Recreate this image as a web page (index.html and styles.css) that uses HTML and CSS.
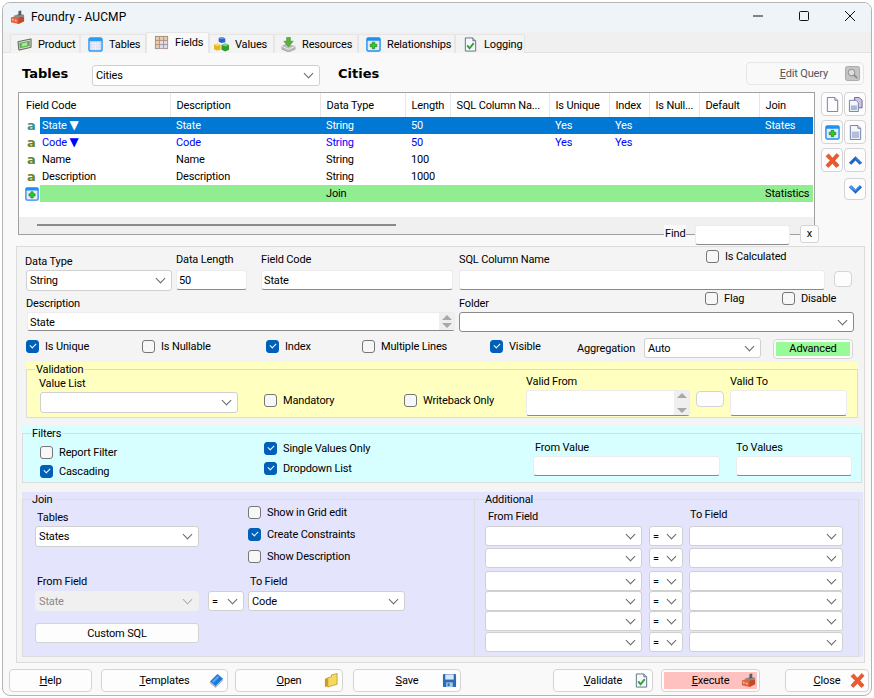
FILE: index.html
```html
<!DOCTYPE html>
<html lang="en">
<head>
    <meta charset="UTF-8">
    <meta name="viewport" content="width=device-width, initial-scale=1.0">
    <title>Foundry - AUCMP</title>
    <link rel="stylesheet" href="styles.css">
</head>
<body>
    <!-- icon sprite -->
    <svg class="sprite" xmlns="http://www.w3.org/2000/svg">
        <symbol id="i-factory" viewBox="0 0 16 16">
            <path d="M1 8l6-2 8 1v5l-6 3-8-2z" fill="#e2633c"/>
            <path d="M9 8l6-1v5l-6 3z" fill="#c4482a"/>
            <path d="M4 6l6-2 5 1v2l-6 1-5-1z" fill="#8a8a8a"/>
            <path d="M9 1l3-.5V5L9 6z" fill="#5c5c5c"/>
            <path d="M2 9l2 .5v2l-2-.5zM5 10l2 .5v2L5 12z" fill="#f3b39c"/>
        </symbol>
        <symbol id="i-product" viewBox="0 0 16 16">
            <path d="M1 5l14-3v9L2 14z" fill="#d8d8d0" stroke="#55604e"/>
            <path d="M2.500 6.500l11-2.500v5.500l-10.500 2.500z" fill="#54b04a"/>
            <path d="M5 7l6-1.500v3.500l-6 1.500z" fill="#b5e0a5"/>
        </symbol>
        <symbol id="i-tables" viewBox="0 0 16 16">
            <rect x="1" y="1" width="14" height="14" rx="2" fill="#d9d9f2" stroke="#2c9cf0" stroke-width="1.500"/>
            <rect x="1" y="1" width="14" height="3.500" fill="#2c9cf0"/>
            <path d="M3 7h10M3 9.500h10M3 12h10M5.500 5v9M8 5v9M10.500 5v9" stroke="#f4f4fc" stroke-width=".8"/>
        </symbol>
        <symbol id="i-fields" viewBox="0 0 16 16">
            <rect x="1.500" y="1.500" width="13" height="13" fill="#f2c9a2" stroke="#a09088"/>
            <rect x="6" y="6" width="8" height="8" fill="#dcdcf2"/>
            <path d="M1.500 5.800h13M1.500 10.200h13M5.800 1.500v13M10.200 1.500v13" stroke="#a89484"/>
        </symbol>
        <symbol id="i-values" viewBox="0 0 16 16">
            <path d="M5 1l4-1 3 1.500v4l-4 1-3-1.500z" fill="#2a62c8"/>
            <path d="M5 1l3 1.500 4-1-3-1.500z" fill="#6a9cf0"/>
            <path d="M0 8l4-1 3 1.500v5l-4 1-3-1.500z" fill="#e6b818"/>
            <path d="M0 8l3 1.500 4-1-3-1.500z" fill="#f8e070"/>
            <path d="M8 8.500l4-1.500 4 1.500v5l-4 2-4-2z" fill="#2e9c2e"/>
            <path d="M8 8.500l4 1.500 4-1.500-4-1.500z" fill="#7ed07e"/>
        </symbol>
        <symbol id="i-resources" viewBox="0 0 16 16">
            <path d="M1 10l4-2 10 2v3l-7 3-7-3z" fill="#bdbdbd" stroke="#8a8a8a" stroke-width=".6"/>
            <path d="M1 10l7 3 7-3" fill="none" stroke="#eee"/>
            <path d="M6 .5h4v4h3l-5 6-5-6h3z" fill="#5cb040" stroke="#3c8a28" stroke-width=".6"/>
        </symbol>
        <symbol id="i-rel" viewBox="0 0 16 16">
            <rect x="1" y="1" width="14" height="14" rx="1.500" fill="#e8e8f6" stroke="#1e90f0" stroke-width="1.500"/>
            <rect x="1" y="1" width="14" height="3" fill="#1e90f0"/>
            <path d="M6.700 5.500h2.600v2.200h2.200v2.600H9.300v2.200H6.700v-2.200H4.500V7.700h2.200z" fill="#2ad02a" stroke="#0a6a0a" stroke-width=".6"/>
        </symbol>
        <symbol id="i-log" viewBox="0 0 16 16">
            <path d="M2.500 1h8l3 3v11h-11z" fill="#f6f8fc" stroke="#5c7088"/>
            <path d="M10.500 1v3h3" fill="#cfd8e6" stroke="#5c7088"/>
            <path d="M4.500 9l2.500 3 4.500-5.500" fill="none" stroke="#2ea02e" stroke-width="2"/>
        </symbol>
        <symbol id="i-doc" viewBox="0 0 16 16">
            <path d="M2.500 .5h8l3 3v12h-11z" fill="#fdfdff" stroke="#6c7ea4"/>
            <path d="M10.500 .5v3h3" fill="#d8deea" stroke="#6c7ea4"/>
        </symbol>
        <symbol id="i-copy" viewBox="0 0 16 16">
            <path d="M7 .5h5l3 3v8H7z" fill="#cfc4e4" stroke="#6a5a94"/>
            <path d="M1.500 3.500h7l2.500 2.500v9.500H1.500z" fill="#f4f6fc" stroke="#6c7ea4"/>
            <rect x="3" y="9" width="6.500" height="5" fill="#a9b6d6"/>
        </symbol>
        <symbol id="i-form" viewBox="0 0 16 16">
            <path d="M2.500 .5h8l3 3v12h-11z" fill="#f4f6fc" stroke="#6c7ea4"/>
            <path d="M10.500 .5v3h3" fill="#d8deea" stroke="#6c7ea4"/>
            <rect x="4" y="7" width="8" height="7" fill="#b4bedc"/>
        </symbol>
        <symbol id="i-del" viewBox="0 0 16 16">
            <path d="M1 3.500L4 1l4 4.500L12.500 .5 15 3l-4.500 5 4.500 5-3 2.500-4-4.500L3.500 15.500 1 13l4.500-5z" fill="#ee5a2a" stroke="#c83c1c" stroke-width=".6"/>
        </symbol>
        <symbol id="i-up" viewBox="0 0 16 16">
            <path d="M1 10.500L8 3.500l7 7-2.500 2L8 8l-4.500 4.500z" fill="#1c64c0"/>
            <path d="M8 3.500l7 7-1 .8L8 5.500z" fill="#3f8ce4"/>
        </symbol>
        <symbol id="i-down" viewBox="0 0 16 16">
            <path d="M1 5.500L8 12.500l7-7-2.500-2L8 8 3.500 3.500z" fill="#1c64c0"/>
            <path d="M1 5.500L3.500 3.500 8 8l4.500-4.500 1 .8L8 9.800z" fill="#4c98ea"/>
        </symbol>
        <symbol id="i-book" viewBox="0 0 16 16">
            <path d="M1 9l8-8 6 5-8 8z" fill="#1e78d8"/>
            <path d="M1 9l6 5 8-8v2l-8 8-6-5z" fill="#b0b8c4"/>
            <path d="M3 9l6-6 2 1.500-6 6z" fill="#58a4f0"/>
        </symbol>
        <symbol id="i-folder" viewBox="0 0 16 16">
            <path d="M1 6l3-1v9l-3 1z" fill="#c89a20"/>
            <path d="M4 5l4-1V2l6-1.500V12L4 15z" fill="#f4d860" stroke="#b08a20" stroke-width=".7"/>
        </symbol>
        <symbol id="i-save" viewBox="0 0 16 16">
            <rect x="1" y="1" width="14" height="14" rx="1" fill="#2a6cb8"/>
            <rect x="3.500" y="1.500" width="9" height="5.500" fill="#d8e6f6"/>
            <rect x="4.500" y="10" width="7" height="5" fill="#a9c6e8"/>
            <rect x="6" y="11" width="2" height="3" fill="#2a6cb8"/>
        </symbol>
        <symbol id="i-query" viewBox="0 0 16 16">
            <rect x=".5" y=".5" width="15" height="15" rx="2" fill="#c4c4c4" stroke="#a8a8a8"/>
            <circle cx="7" cy="7" r="3.500" fill="#dedede" stroke="#8a8a8a"/>
            <path d="M9.500 9.500l3.500 3.500" stroke="#8a8a8a" stroke-width="2"/>
        </symbol>
    </svg>

    <div class="window">
        <div class="titlebar">
            <svg class="icon title-icon"><use href="#i-factory"/></svg>
            <span class="title">Foundry - AUCMP</span>
            <div class="caption-buttons">
                <svg class="caption" viewBox="0 0 12 12"><path d="M1 6h10" stroke="#111"/></svg>
                <svg class="caption" viewBox="0 0 12 12"><rect x="1.500" y="1.500" width="9" height="9" rx="1" fill="none" stroke="#111"/></svg>
                <svg class="caption" viewBox="0 0 12 12"><path d="M1 1l10 10M11 1L1 11" stroke="#111"/></svg>
            </div>
        </div>

        <div class="tabs">
            <div class="tab"><svg class="icon"><use href="#i-product"/></svg>Product</div>
            <div class="tab"><svg class="icon"><use href="#i-tables"/></svg>Tables</div>
            <div class="tab active"><svg class="icon"><use href="#i-fields"/></svg>Fields</div>
            <div class="tab"><svg class="icon"><use href="#i-values"/></svg>Values</div>
            <div class="tab"><svg class="icon"><use href="#i-resources"/></svg>Resources</div>
            <div class="tab"><svg class="icon"><use href="#i-rel"/></svg>Relationships</div>
            <div class="tab"><svg class="icon"><use href="#i-log"/></svg>Logging</div>
        </div>

        <div class="page">
            <div class="head">
                <span class="head-title">Tables</span>
                <div class="select head-select">Cities</div>
                <span class="head-title head-name">Cities</span>
                <div class="edit-query"><span><u>E</u>dit Query</span><svg class="icon"><use href="#i-query"/></svg></div>
            </div>

            <div class="list-row">
                <div class="grid-box">
                    <table class="field-grid">
                        <colgroup>
                            <col class="c-icon"><col class="c-code"><col class="c-desc"><col class="c-type"><col class="c-len"><col class="c-sql"><col class="c-uniq"><col class="c-idx"><col class="c-null"><col class="c-def"><col class="c-join">
                        </colgroup>
                        <thead>
                            <tr>
                                <th colspan="2" class="first">Field Code</th><th>Description</th><th>Data Type</th><th>Length</th><th>SQL Column Na...</th><th>Is Unique</th><th>Index</th><th>Is Null...</th><th>Default</th><th>Join</th>
                            </tr>
                        </thead>
                        <tbody>
                            <tr class="selected">
                                <td class="glyph"><span class="a-icon teal">a</span></td>
                                <td class="code">State <span class="arrow">▼</span></td><td>State</td><td>String</td><td>50</td><td></td><td>Yes</td><td>Yes</td><td></td><td></td><td>States</td>
                            </tr>
                            <tr class="key">
                                <td class="glyph"><span class="a-icon">a</span></td>
                                <td class="code">Code <span class="arrow">▼</span></td><td>Code</td><td>String</td><td>50</td><td></td><td>Yes</td><td>Yes</td><td></td><td></td><td></td>
                            </tr>
                            <tr>
                                <td class="glyph"><span class="a-icon">a</span></td>
                                <td class="code">Name</td><td>Name</td><td>String</td><td>100</td><td></td><td></td><td></td><td></td><td></td><td></td>
                            </tr>
                            <tr>
                                <td class="glyph"><span class="a-icon">a</span></td>
                                <td class="code">Description</td><td>Description</td><td>String</td><td>1000</td><td></td><td></td><td></td><td></td><td></td><td></td>
                            </tr>
                            <tr class="join-row">
                                <td class="glyph"><svg class="icon"><use href="#i-rel"/></svg></td>
                                <td class="code"></td><td></td><td>Join</td><td></td><td></td><td></td><td></td><td></td><td></td><td>Statistics</td>
                            </tr>
                        </tbody>
                    </table>
                    <div class="grid-filler"></div>
                    <div class="hscroll"><div class="hthumb"></div></div>
                </div>

                <div class="side-buttons">
                    <button class="side-btn"><svg class="icon"><use href="#i-doc"/></svg></button>
                    <button class="side-btn"><svg class="icon"><use href="#i-copy"/></svg></button>
                    <button class="side-btn"><svg class="icon"><use href="#i-rel"/></svg></button>
                    <button class="side-btn"><svg class="icon"><use href="#i-form"/></svg></button>
                    <button class="side-btn"><svg class="icon"><use href="#i-del"/></svg></button>
                    <button class="side-btn"><svg class="icon"><use href="#i-up"/></svg></button>
                    <button class="side-btn down-btn"><svg class="icon"><use href="#i-down"/></svg></button>
                </div>
            </div>

            <div class="find-row">
                <span class="find-label">Find</span>
                <input class="text find-input" type="text">
                <button class="find-x">x</button>
            </div>

            <div class="panel">
                <div class="row-one">
                    <div class="field type-field">
                        <label>Data Type</label>
                        <div class="select type-select">String</div>
                    </div>
                    <div class="field length-field">
                        <label class="gap-3">Data Length</label>
                        <input class="text" type="text" value="50">
                    </div>
                    <div class="field code-field">
                        <label class="gap-3">Field Code</label>
                        <input class="text" type="text" value="State">
                    </div>
                    <div class="field sql-field">
                        <div class="label-row gap-3">
                            <label class="sql-label">SQL Column Name</label>
                            <label class="check raise"><input type="checkbox">Is Calculated</label>
                        </div>
                        <input class="text" type="text">
                    </div>
                    <button class="small-btn sql-btn"></button>
                </div>

                <div class="row-two">
                    <div class="field">
                        <label>Description</label>
                        <div class="text desc-box">State
                            <div class="spin"><i class="spin-up"></i><i class="spin-down"></i></div>
                        </div>
                    </div>
                    <div class="field">
                        <div class="label-row">
                            <label class="folder-label">Folder</label>
                            <label class="check raise flag"><input type="checkbox">Flag</label>
                            <label class="check raise"><input type="checkbox">Disable</label>
                        </div>
                        <div class="select folder-select"></div>
                    </div>
                </div>

                <div class="row-three">
                    <label class="check"><input type="checkbox" checked>Is Unique</label>
                    <label class="check"><input type="checkbox">Is Nullable</label>
                    <label class="check"><input type="checkbox" checked>Index</label>
                    <label class="check"><input type="checkbox">Multiple Lines</label>
                    <label class="check"><input type="checkbox" checked>Visible</label>
                    <span class="agg-label">Aggregation</span>
                    <div class="select">Auto</div>
                    <button class="advanced"><span>Advanced</span></button>
                </div>

                <div class="group validation">
                    <fieldset>
                        <legend>Validation</legend>
                        <div class="validation-grid">
                            <div class="field value-list">
                                <label>Value List</label>
                                <div class="select"></div>
                            </div>
                            <label class="check"><input type="checkbox">Mandatory</label>
                            <label class="check"><input type="checkbox">Writeback Only</label>
                            <div class="field valid-from">
                                <label>Valid From</label>
                                <div class="text tall-box">
                                    <div class="spin"><i class="spin-up"></i><i class="spin-down"></i></div>
                                </div>
                            </div>
                            <button class="small-btn valid-btn"></button>
                            <div class="field">
                                <label>Valid To</label>
                                <input class="text tall-box" type="text">
                            </div>
                        </div>
                    </fieldset>
                </div>

                <div class="group filters">
                    <fieldset>
                        <legend>Filters</legend>
                        <div class="filters-grid">
                            <div class="check-stack low">
                                <label class="check"><input type="checkbox">Report Filter</label>
                                <label class="check"><input type="checkbox" checked>Cascading</label>
                            </div>
                            <div class="check-stack high">
                                <label class="check"><input type="checkbox" checked>Single Values Only</label>
                                <label class="check"><input type="checkbox" checked>Dropdown List</label>
                            </div>
                            <div class="field from-value">
                                <label>From Value</label>
                                <input class="text" type="text">
                            </div>
                            <div class="field to-value">
                                <label>To Values</label>
                                <input class="text" type="text">
                            </div>
                        </div>
                    </fieldset>
                </div>

                <div class="group join-group">
                    <fieldset class="join-set">
                        <legend>Join</legend>
                        <div class="join-top">
                            <div class="field join-tables">
                                <label>Tables</label>
                                <div class="select">States</div>
                            </div>
                            <div class="check-stack join-checks">
                                <label class="check"><input type="checkbox">Show in Grid edit</label>
                                <label class="check"><input type="checkbox" checked>Create Constraints</label>
                                <label class="check"><input type="checkbox">Show Description</label>
                            </div>
                        </div>
                        <div class="join-fields">
                            <div class="field">
                                <label>From Field</label>
                                <div class="select disabled">State</div>
                            </div>
                            <div class="select op">=</div>
                            <div class="field">
                                <label>To Field</label>
                                <div class="select">Code</div>
                            </div>
                        </div>
                        <button class="custom-sql">Custom SQL</button>
                    </fieldset>

                    <fieldset class="additional-set">
                        <legend>Additional</legend>
                        <div class="additional-grid">
                            <span class="add-from">From Field</span><span></span><span class="add-to">To Field</span>
                            <div class="select"></div><div class="select op">=</div><div class="select to"></div>
                            <div class="select"></div><div class="select op">=</div><div class="select to"></div>
                            <div class="select"></div><div class="select op">=</div><div class="select to"></div>
                            <div class="select"></div><div class="select op">=</div><div class="select to"></div>
                            <div class="select"></div><div class="select op">=</div><div class="select to"></div>
                            <div class="select"></div><div class="select op">=</div><div class="select to"></div>
                        </div>
                    </fieldset>
                </div>
            </div>

            <div class="footer">
                <button class="btn btn-help"><u>H</u>elp</button>
                <button class="btn btn-templates"><u>T</u>emplates<svg class="icon"><use href="#i-book"/></svg></button>
                <button class="btn btn-open"><u>O</u>pen<svg class="icon"><use href="#i-folder"/></svg></button>
                <button class="btn btn-save"><u>S</u>ave<svg class="icon"><use href="#i-save"/></svg></button>
                <button class="btn btn-validate"><u>V</u>alidate<svg class="icon"><use href="#i-log"/></svg></button>
                <button class="btn btn-execute"><span class="execute-fill"><u>E</u>xecute<svg class="icon"><use href="#i-factory"/></svg></span></button>
                <button class="btn btn-close"><u>C</u>lose<svg class="icon"><use href="#i-del"/></svg></button>
            </div>
        </div>
    </div>
</body>
</html>
```

FILE: styles.css
```css
/* Reset */
* {
    box-sizing: border-box;
}

body {
    margin: 0;
    background-color: #fff;
    font-family: Roboto, "Liberation Sans", sans-serif;
    font-size: 11px;
    letter-spacing: -0.15px;
    color: #000;
    overflow: hidden;
}

.sprite {
    display: none;
}

.icon {
    width: 15px;
    height: 15px;
    flex: none;
    display: block;
}

button {
    font: inherit;
    letter-spacing: inherit;
    color: inherit;
    padding: 0;
}

label {
    display: block;
    height: 16px;
    padding-top: 1px;
    line-height: 16px;
}

/* Window frame */
.window {
    margin: 2px 0 0 2px;
    width: 870px;
    height: 694px;
    border: 1px solid #b4b4b4;
    border-radius: 8px;
    overflow: hidden;
    background-color: #f9f9f9;
}

.titlebar {
    height: 29px;
    background-color: #eff4f9;
    display: flex;
    align-items: center;
    padding: 0 0 1px 7px;
}

.title-icon {
    margin-right: 6px;
}

.title {
    font-size: 12px;
    letter-spacing: 0.1px;
}

.caption-buttons {
    margin-left: auto;
    display: flex;
    gap: 34px;
    padding: 0 15px 2px 0;
}

.caption {
    width: 12px;
    height: 12px;
}

/* Tabs */
.tabs {
    height: 21px;
    background-color: #f0f0f0;
    padding-left: 7px;
    display: grid;
    grid-template-columns: 70px 66px 63px 65px 84px 97px 70px;
    align-items: end;
    border-bottom: 1px solid #e2e2e2;
}

.tab {
    height: 19px;
    background-color: #f3f3f3;
    border: 1px solid #e6e6e6;
    border-bottom: 0;
    display: flex;
    align-items: center;
    gap: 6px;
    padding: 1px 0 0 7px;
}

.tab:nth-child(1) { padding-left: 6px; }
.tab:nth-child(4) { padding-left: 4px; }
.tab:nth-child(5) { padding-left: 6px; }

.tab.active {
    height: 21px;
    background-color: #f9f9f9;
    padding-bottom: 2px;
}

/* Header row */
.page {
    height: 643px;
}

.head {
    display: flex;
    align-items: flex-start;
    height: 39px;
    padding: 9px 0 0 19px;
}

.head-title {
    font-family: "DejaVu Sans", sans-serif;
    font-size: 13px;
    font-weight: 700;
    letter-spacing: 0;
    width: 70px;
    line-height: 24px;
}

.head-name {
    width: 408px;
    margin-left: 18px;
}

.select {
    position: relative;
    height: 20px;
    background-color: #fff;
    border: 1px solid #d0d0d0;
    border-radius: 3px;
    padding: 1px 0 0 3px;
    line-height: 18px;
}

.select::after {
    content: "";
    position: absolute;
    right: 7px;
    top: 4px;
    width: 6px;
    height: 6px;
    border-right: 1px solid #666;
    border-bottom: 1px solid #666;
    transform: rotate(45deg);
}

.head-select {
    width: 228px;
    height: 21px;
    margin-top: 3px;
}

.edit-query {
    width: 118px;
    height: 23px;
    border: 1px solid #e6e6e6;
    border-radius: 4px;
    display: flex;
    align-items: center;
    justify-content: flex-end;
    gap: 17px;
    padding-right: 3px;
    color: #555;
}

/* Field list */
.list-row {
    display: flex;
    padding-left: 15px;
}

.grid-box {
    width: 797px;
    height: 143px;
    border: 1px solid #a0a0a0;
    background-color: #fff;
}

.field-grid {
    border-collapse: collapse;
    table-layout: fixed;
    width: 794px;
}

.c-icon { width: 21px; }
.c-code { width: 130px; }
.c-desc { width: 150px; }
.c-type { width: 85px; }
.c-len { width: 45px; }
.c-sql { width: 99px; }
.c-uniq { width: 60px; }
.c-idx { width: 40px; }
.c-null { width: 50px; }
.c-def { width: 60px; }
.c-join { width: 54px; }

.field-grid th {
    height: 24px;
    font-weight: 400;
    text-align: left;
    padding: 0 0 0 6px;
    border-right: 1px solid #e6e6e6;
    overflow: hidden;
    white-space: nowrap;
}

.field-grid th.first {
    padding-left: 7px;
}

.field-grid th:last-child {
    border-right: 0;
}

.field-grid td {
    height: 17px;
    padding: 1px 0 0 6px;
    line-height: 16px;
    white-space: nowrap;
    overflow: hidden;
}

.field-grid td.code {
    padding-left: 2px;
}

.field-grid td.glyph {
    padding: 0;
    background-color: #fff;
}

.glyph .icon {
    width: 14px;
    height: 14px;
    margin-left: 6px;
}

.a-icon {
    display: block;
    margin-left: 8px;
    font-family: "DejaVu Sans", sans-serif;
    font-weight: 700;
    font-size: 13px;
    letter-spacing: 0;
    color: #66852c;
}

.a-icon.teal {
    color: #3f8f88;
}

.arrow {
    font-family: "DejaVu Sans", sans-serif;
    font-size: 12px;
    line-height: 12px;
}

.selected td {
    background-color: #0078d4;
    color: #fff;
}

.key td {
    color: #0000ff;
}

.join-row td {
    background-color: #90ee90;
}

.grid-filler {
    height: 15px;
}

.hscroll {
    height: 17px;
    background-color: #f0f0f0;
    padding: 7px 0 0 18px;
}

.hthumb {
    width: 359px;
    height: 2px;
    background-color: #8a8a8a;
}

.side-buttons {
    display: grid;
    grid-template-columns: 22px 22px;
    grid-auto-rows: 24px;
    gap: 4px 1px;
    margin-left: 6px;
}

.side-btn {
    background-color: #fdfdfd;
    border: 1px solid #d4d4d4;
    border-radius: 4px;
    display: flex;
    align-items: center;
    justify-content: center;
}

.down-btn {
    grid-column: 2;
    margin-top: 2px;
}

/* Find box, lies over the bottom edge of the list */
.find-row {
    display: flex;
    align-items: flex-start;
    height: 21px;
    margin-top: -10px;
    padding-left: 661px;
    position: relative;
}

.find-label {
    width: 22px;
    background-color: #f9f9f9;
    padding-left: 1px;
    line-height: 18px;
}

.text {
    display: block;
    height: 20px;
    width: 100%;
    background-color: #fff;
    border: 1px solid #ececec;
    border-bottom-color: #8a8a8a;
    border-radius: 3px;
    font: inherit;
    letter-spacing: inherit;
    padding: 1px 0 0 2px;
    outline: 0;
}

.find-row .find-input {
    width: 95px;
    height: 20px;
    margin-left: 9px;
}

.find-x {
    width: 19px;
    height: 18px;
    margin-left: 10px;
    background-color: #fdfdfd;
    border: 1px solid #d4d4d4;
    border-radius: 3px;
    line-height: 14px;
}

/* Edit panel */
.panel {
    margin-left: 13px;
    width: 849px;
    height: 417px;
    background-color: #f4f4f4;
    border: 1px solid #dcdcdc;
}

.field {
    display: flex;
    flex-direction: column;
}

.field > label {
    margin-bottom: 1px;
}

.field > label.gap-3,
.label-row.gap-3 {
    margin-bottom: 3px;
}

.label-row {
    display: flex;
    margin-bottom: 1px;
}

.row-one {
    display: grid;
    grid-template-columns: 151px 85px 198px 375px auto;
    height: 40px;
    margin: 4px 0 0 8px;
}

.type-field {
    padding-top: 2px;
}

.type-select {
    margin-left: 1px;
    width: 146px;
    height: 21px;
}

.length-field .text { width: 71px; }
.code-field .text { width: 192px; }
.sql-field .text { width: 366px; }

.sql-label {
    width: 247px;
}

.raise {
    margin-top: -3px;
}

.sql-field .raise {
    margin-top: -1px;
}

.sql-btn {
    width: 18px;
    height: 16px;
    margin-top: 20px;
}

.small-btn {
    background-color: #fdfdfd;
    border: 1px solid #d4d4d4;
    border-radius: 4px;
}

.row-two {
    display: grid;
    grid-template-columns: 433px 395px;
    margin: 4px 0 0 9px;
    height: 37px;
}

.desc-box {
    width: 428px;
    height: 19px;
    margin-left: 1px;
    line-height: 17px;
    position: relative;
}

.spin {
    position: absolute;
    right: 0;
    top: 0;
    bottom: 0;
    width: 15px;
    background-color: #efefef;
}

.spin i {
    position: absolute;
    left: 3px;
    width: 0;
    height: 0;
    border-left: 5px solid transparent;
    border-right: 5px solid transparent;
}

.spin-up {
    top: 2px;
    border-bottom: 5px solid #a8a8a8;
}

.spin-down {
    bottom: 2px;
    border-top: 5px solid #a8a8a8;
}

.folder-label {
    width: 246px;
}

.flag {
    width: 77px;
}

.folder-select {
    border-color: #8a8a8a;
}

.row-three {
    display: grid;
    grid-template-columns: 116px 124px 96px 128px 87px 67px 117px 92px;
    margin: 6px 0 0 9px;
    height: 21px;
}

.row-three .check {
    margin-top: 2px;
}

.agg-label {
    line-height: 16px;
    margin-top: 3px;
}

.advanced {
    margin-left: 12px;
    width: 80px;
    height: 20px;
    margin-top: 1px;
    background-color: #fdfdfd;
    border: 1px solid #d4d4d4;
    border-radius: 4px;
    padding: 2px;
}

.advanced span {
    display: block;
    height: 14px;
    line-height: 14px;
    background-color: #98fb98;
}

/* Checkboxes */
.check {
    display: flex;
    align-items: center;
    gap: 6px;
    height: 13px;
    padding: 0;
    white-space: nowrap;
}

.check input {
    appearance: none;
    margin: 0;
    width: 13px;
    height: 13px;
    flex: none;
    background-color: #f7f7f7;
    border: 1px solid #767676;
    border-radius: 3px;
    position: relative;
}

.check input:checked {
    background-color: #005fb8;
    border-color: #005fb8;
}

.check input:checked::after {
    content: "";
    position: absolute;
    left: 3px;
    top: 2px;
    width: 5px;
    height: 3px;
    border-left: 1px solid #fff;
    border-bottom: 1px solid #fff;
    transform: rotate(-45deg);
}

/* Coloured groups */
.group fieldset {
    margin: 0;
    padding: 0;
    min-width: 0;
    border: 1px solid #dcdcdc;
    border-radius: 0;
}

.group legend {
    margin-left: 8px;
    padding: 0 1px;
    line-height: 16px;
    height: 14px;
}

.validation {
    margin: 3px 0 0 9px;
    width: 832px;
    background-color: #ffffc0;
}

.validation fieldset {
    height: 56px;
}

.validation-grid {
    display: grid;
    grid-template-columns: 225px 140px 122px 170px 34px 117px;
    margin: -3px 0 0 12px;
}

.value-list {
    padding-top: 2px;
}

.value-list .select {
    margin-left: 1px;
    width: 198px;
    height: 21px;
}

.validation-grid > .check {
    margin-top: 21px;
}

.tall-box {
    height: 26px;
    position: relative;
}

.valid-from .tall-box {
    width: 164px;
}

.valid-btn {
    width: 28px;
    height: 16px;
    margin-top: 18px;
}

.filters {
    margin: 8px 0 0 5px;
    width: 840px;
    background-color: #d8ffff;
}

.filters fieldset {
    height: 57px;
}

.filters-grid {
    display: grid;
    grid-template-columns: 224px 269px 203px 120px;
    margin: -1px 0 0 17px;
}

.check-stack {
    display: flex;
    flex-direction: column;
}

.low {
    padding-top: 7px;
    gap: 6px;
}

.high {
    padding-top: 3px;
    gap: 7px;
}

.from-value .text {
    width: 187px;
}

.from-value label {
    margin-left: 2px;
}

.to-value .text {
    width: 116px;
}

/* Join */
.join-group {
    margin: 9px 0 0 5px;
    width: 841px;
    display: flex;
    background-color: #e4e4fc;
    padding-right: 4px;
}

.join-group fieldset {
    height: 165px;
}

.join-set {
    width: 453px;
}

.group .additional-set {
    width: 384px;
    border-left: 0;
}

.additional-set legend {
    margin-left: 9px;
}

.join-top {
    display: grid;
    grid-template-columns: 213px 180px;
    height: 67px;
    margin-left: 12px;
}

.join-tables {
    padding-top: 3px;
}

.join-tables label {
    margin-left: 2px;
}

.join-tables .select {
    width: 164px;
    height: 21px;
}

.join-checks {
    gap: 9px;
}

.join-fields {
    display: grid;
    grid-template-columns: 173px 40px 157px;
    margin-left: 12px;
}

.join-fields label {
    margin-bottom: 2px;
    margin-left: 2px;
}

.join-fields .field:first-child .select {
    width: 164px;
}

.join-fields .op {
    width: 36px;
    margin-top: 18px;
}

.select.disabled {
    background-color: #f0f0f0;
    border-color: #f0f0f0;
    color: #8a8a8a;
}

.select.disabled::after {
    border-color: #b0b0b0;
}

.custom-sql {
    display: block;
    margin: 12px 0 0 12px;
    width: 164px;
    height: 20px;
    background-color: #fdfdfd;
    border: 1px solid #d4d4d4;
    border-radius: 3px;
}

.additional-grid {
    display: grid;
    grid-template-columns: 157px 41px 160px;
    grid-template-rows: 20px 22px 23px 20px 20px 21px 20px;
    margin-left: 10px;
}

.add-from {
    padding: 3px 0 0 3px;
    line-height: 16px;
}

.add-to {
    padding: 1px 0 0 7px;
    line-height: 16px;
}

.additional-grid .select {
    height: 20px;
}

.additional-grid .op {
    margin-left: 7px;
}

.additional-grid .to {
    margin-left: 6px;
}

/* Footer buttons */
.footer {
    display: flex;
    height: 23px;
    margin-top: 6px;
    padding-left: 6px;
}

.btn {
    position: relative;
    height: 23px;
    background-color: #fdfdfd;
    border: 1px solid #d4d4d4;
    border-radius: 4px;
}

.btn .icon {
    position: absolute;
    right: 3px;
    top: 3px;
}

.btn-help { width: 83px; }
.btn-templates { width: 127px; margin-left: 9px; }
.btn-open { width: 108px; margin-left: 7px; }
.btn-save { width: 108px; margin-left: 10px; }
.btn-validate { width: 100px; margin-left: 92px; }
.btn-execute { width: 99px; margin-left: 8px; padding: 2px; }
.btn-close { width: 84px; margin-left: 25px; }

.execute-fill {
    display: block;
    height: 17px;
    line-height: 17px;
    background-color: #ffc0c0;
}
```
